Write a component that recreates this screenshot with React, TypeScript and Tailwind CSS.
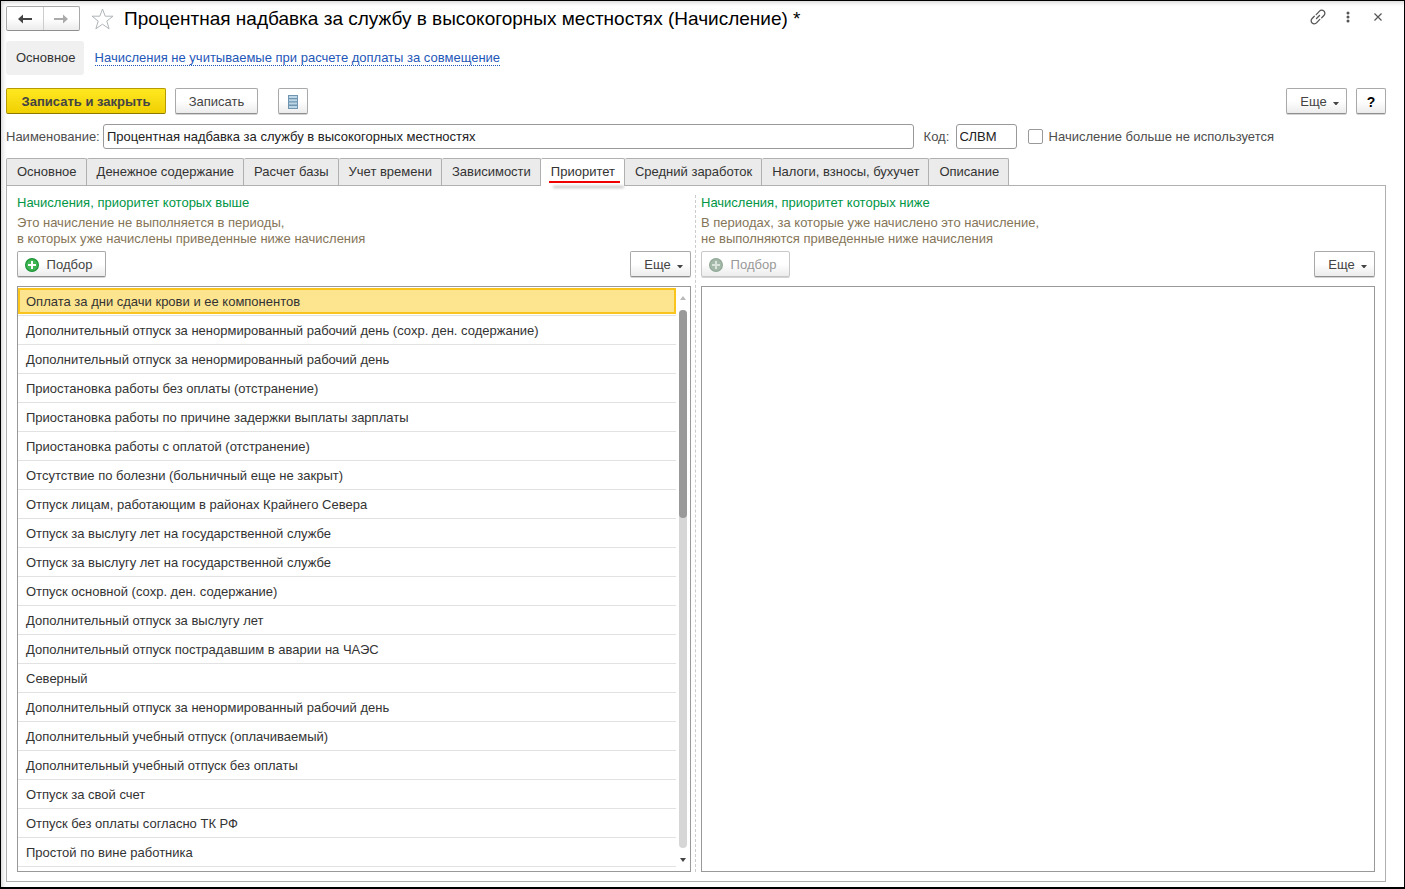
import React, { useState } from "react";

const tabs = [
  "Основное",
  "Денежное содержание",
  "Расчет базы",
  "Учет времени",
  "Зависимости",
  "Приоритет",
  "Средний заработок",
  "Налоги, взносы, бухучет",
  "Описание",
];

const accruals = [
  "Оплата за дни сдачи крови и ее компонентов",
  "Дополнительный отпуск за ненормированный рабочий день (сохр. ден. содержание)",
  "Дополнительный отпуск за ненормированный рабочий день",
  "Приостановка работы без оплаты (отстранение)",
  "Приостановка работы по причине задержки выплаты зарплаты",
  "Приостановка работы с оплатой (отстранение)",
  "Отсутствие по болезни (больничный еще не закрыт)",
  "Отпуск лицам, работающим в районах Крайнего Севера",
  "Отпуск за выслугу лет на государственной службе",
  "Отпуск за выслугу лет на государственной службе",
  "Отпуск основной (сохр. ден. содержание)",
  "Дополнительный отпуск за выслугу лет",
  "Дополнительный отпуск пострадавшим в аварии на ЧАЭС",
  "Северный",
  "Дополнительный отпуск за ненормированный рабочий день",
  "Дополнительный учебный отпуск (оплачиваемый)",
  "Дополнительный учебный отпуск без оплаты",
  "Отпуск за свой счет",
  "Отпуск без оплаты согласно ТК РФ",
  "Простой по вине работника",
];

const buttonLook =
  "flex items-center justify-center rounded-[2px] border border-[#a9a9a9] border-b-[#8f8f8f] bg-linear-to-b from-white from-50% to-[#ececec] pt-px text-[#444] shadow-[0_1px_0_#d4d4d4]";

function MoreButton() {
  return (
    <button type="button" className={`${buttonLook} h-[26px] w-[61px] gap-1.5 pl-1.5`}>
      Еще
      <svg width="6" height="4" viewBox="0 0 6 4" className="mt-1" aria-hidden="true">
        <path d="M0 0h6L3.500 3h-1z" fill="#444" />
      </svg>
    </button>
  );
}

function PickButton({ disabled = false }: { disabled?: boolean }) {
  return (
    <button
      type="button"
      disabled={disabled}
      className={`${buttonLook} h-[26px] w-[89px] gap-2 pr-1.5 disabled:border-[#c8c8c8] disabled:text-[#999]`}
    >
      <svg width="14" height="14" viewBox="0 0 14 14" aria-hidden="true">
        <circle cx="7" cy="7" r="6.4" fill={disabled ? "#a3b8a8" : "#3fb553"} stroke={disabled ? "#93aa99" : "#1f9439"} strokeWidth="1.2" />
        <path d="M7 3v8M3 7h8" stroke={disabled ? "#d9e2db" : "#fff"} strokeWidth="2" />
      </svg>
      Подбор
    </button>
  );
}

interface PriorityPanelProps {
  title: string;
  hint: [string, string];
  items: string[];
  disabled?: boolean;
}

function PriorityPanel({ title, hint, items, disabled }: PriorityPanelProps) {
  const [selected, setSelected] = useState(0);
  return (
    <section className="flex min-w-0 flex-1 flex-col">
      <h2 className="leading-4 text-[#009646]">{title}</h2>
      <p className="mt-1 leading-4 text-[#857558]">
        {hint[0]}
        <br />
        {hint[1]}
      </p>
      <div className="mt-1 flex justify-between">
        <PickButton disabled={disabled} />
        <MoreButton />
      </div>
      <div className="mt-[9px] flex flex-1 border border-[#999]">
        {items.length > 0 && (
          <>
            <ul className="min-w-0 flex-1 pb-1">
              {items.map((item, i) => (
                <li key={i} className="h-[29px] border-b border-[#e2e2e2] pt-px pb-px">
                  <button
                    type="button"
                    onClick={() => setSelected(i)}
                    className={`flex h-[26px] w-full items-center truncate border-2 px-1.5 pt-0.5 text-left text-[#333] ${
                      i === selected ? "border-[#f9c51d] bg-[#fde58f]" : "border-transparent"
                    }`}
                  >
                    {item}
                  </button>
                </li>
              ))}
            </ul>
            <div className="flex w-[14px] flex-col items-center py-[9px]">
              <svg width="6" height="4" viewBox="0 0 6 4" aria-hidden="true">
                <path d="M3 0l3 4H0z" fill="#b9b9b9" />
              </svg>
              <div className="my-2.5 w-2 flex-1 rounded-full bg-[#d6d6d6]">
                <div className="h-[208px] rounded-full bg-[#999]" />
              </div>
              <svg width="6" height="4" viewBox="0 0 6 4" aria-hidden="true">
                <path d="M0 0h6L3 4z" fill="#444" />
              </svg>
            </div>
          </>
        )}
      </div>
    </section>
  );
}

export default function App() {
  const [active, setActive] = useState(5);
  return (
    <div className="flex min-h-screen flex-col border border-b-2 border-black bg-white pr-[18px] pb-[5px] pl-[5px] font-['Liberation_Sans',Arial,sans-serif] text-[13px] text-[#333] shadow-[inset_4px_4px_5px_-3px_#ccc]">
      <header className="flex items-center pt-[5px]">
        <div className="flex h-[25px] w-[74px] rounded-[2px] border border-[#a9a9a9] border-b-[#8f8f8f] bg-linear-to-b from-white from-50% to-[#ececec]">
          <button type="button" aria-label="Назад" className="flex flex-1 items-center justify-center border-r border-[#ccc]">
            <svg width="14" height="10" viewBox="0 0 14 10" aria-hidden="true">
              <path d="M14 4v2H5v3.500L0 5 5 .5V4z" fill="#444" />
            </svg>
          </button>
          <button type="button" aria-label="Вперед" className="flex flex-1 items-center justify-center">
            <svg width="14" height="10" viewBox="0 0 14 10" aria-hidden="true">
              <path d="M0 4v2h9v3.500L14 5 9 .5V4z" fill="#aaa" />
            </svg>
          </button>
        </div>
        <button type="button" aria-label="В избранное" className="ml-[11px]">
          <svg width="23" height="22" viewBox="0 0 23 22" fill="#fff" stroke="#b0b5b8" strokeWidth="1" aria-hidden="true">
            <path d="M11.5 1l2.700 7.200H22l-6.200 4.900 2.300 7.700-6.600-4.600-6.600 4.600 2.300-7.700L1 8.200h7.800z" />
          </svg>
        </button>
        <h1 className="ml-2.5 text-[19px] leading-6 text-black">
          Процентная надбавка за службу в высокогорных местностях (Начисление) *
        </h1>
        <div className="ml-auto flex items-center pb-1">
          <button type="button" aria-label="Ссылка">
            <svg width="16" height="16" viewBox="0 0 16 16" fill="none" stroke="#555" strokeWidth="1.3" strokeLinecap="round" aria-hidden="true">
              <path d="M6.200 5.600l3.300-3.500a3 3 0 0 1 4.400 0 3 3 0 0 1 0 4.400l-2.200 2.300M9.800 10.400l-3.300 3.500a3 3 0 0 1-4.400 0 3 3 0 0 1 0-4.400l2.200-2.300M6.500 9.500l3-3" />
            </svg>
          </button>
          <button type="button" aria-label="Меню" className="ml-5">
            <svg width="4" height="12" viewBox="0 0 4 12" fill="#555" aria-hidden="true">
              <circle cx="2" cy="2" r="1.5" />
              <circle cx="2" cy="6" r="1.5" />
              <circle cx="2" cy="10" r="1.5" />
            </svg>
          </button>
          <button type="button" aria-label="Закрыть" className="mr-1 ml-6">
            <svg width="8" height="8" viewBox="0 0 8 8" stroke="#555" strokeWidth="1.2" aria-hidden="true">
              <path d="M.5.5l7 7M7.500.5l-7 7" />
            </svg>
          </button>
        </div>
      </header>

      <nav className="mt-2.5 flex items-center gap-[11px]">
        <span className="flex h-[34px] items-center rounded-[3px] bg-[#f0f0f0] pr-2 pl-2.5">Основное</span>
        <a href="#accruals" className="border-b border-dotted border-[#1f57b8] leading-[14px] text-[#1f57b8]">
          Начисления не учитываемые при расчете доплаты за совмещение
        </a>
      </nav>

      <div className="mt-[13px] flex">
        <button
          type="button"
          className="h-[26px] w-40 rounded-[2px] border border-[#b59a00] border-b-[#8f7a00] bg-linear-to-b from-[#ffe81f] to-[#f0d000] pt-px font-bold text-[#444]"
        >
          Записать и закрыть
        </button>
        <button type="button" className={`${buttonLook} ml-[9px] h-[26px] w-[83px]`}>
          Записать
        </button>
        <button type="button" aria-label="Список" className={`${buttonLook} ml-5 h-[26px] w-[30px]`}>
          <svg width="10" height="14" viewBox="0 0 10 14" aria-hidden="true">
            <path d="M0 0h10v14H0z" fill="#6f95b0" />
            <path d="M1 2h8M1 5.300h8M1 8.600h8M1 12h8" stroke="#bdd6e6" strokeWidth="2" />
          </svg>
        </button>
        <div className="ml-auto flex gap-[9px]">
          <MoreButton />
          <button type="button" className={`${buttonLook} h-[26px] w-[30px] text-sm font-bold text-black`}>
            ?
          </button>
        </div>
      </div>

      <div className="mt-2.5 flex items-center text-[#4d4d4d]">
        <label htmlFor="name" className="w-[97px] whitespace-nowrap">Наименование:</label>
        <input
          id="name"
          defaultValue="Процентная надбавка за службу в высокогорных местностях"
          className="h-[25px] min-w-0 flex-1 rounded-[3px] border border-[#999] px-[3px] text-[#222]"
        />
        <label htmlFor="code" className="ml-2.5 w-8">Код:</label>
        <input id="code" defaultValue="СЛВМ" className="h-[25px] w-[61px] rounded-[3px] border border-[#999] px-[3px] text-[#222]" />
        <input id="unused" type="checkbox" className="ml-[11px] size-[15px] appearance-none rounded-[2px] border border-[#999] checked:bg-[#777]" />
        <label htmlFor="unused" className="mr-28 ml-1.5 whitespace-nowrap">Начисление больше не используется</label>
      </div>

      <div role="tablist" className="mt-[9px] flex">
        {tabs.map((tab, i) => (
          <button
            key={tab}
            type="button"
            role="tab"
            aria-selected={i === active}
            onClick={() => setActive(i)}
            className={`relative rounded-t-[2px] border-t border-r border-[#b0b0b0] pr-[9px] pl-2.5 whitespace-nowrap first:border-l ${
              i === active ? "z-10 -mb-px h-7 bg-white pb-px" : "h-[27px] bg-[#ebebeb]"
            }`}
          >
            {tab}
            {i === active && (
              <span className="absolute right-1 bottom-[3px] left-2 h-0.5 bg-[#f00000] shadow-[4px_5px_3px_#bbb]" />
            )}
          </button>
        ))}
      </div>

      <main className="flex flex-1 border border-[#b0b0b0] px-2.5 pt-[9px] pb-[9px]">
        <PriorityPanel
          title="Начисления, приоритет которых выше"
          hint={["Это начисление не выполняется в периоды,", "в которых уже начислены приведенные ниже начисления"]}
          items={accruals}
        />
        <div className="mr-[5px] ml-1 border-l border-dashed border-[#ccc]" />
        <PriorityPanel
          title="Начисления, приоритет которых ниже"
          hint={["В периодах, за которые уже начислено это начисление,", "не выполняются приведенные ниже начисления"]}
          items={[]}
          disabled
        />
      </main>
    </div>
  );
}
